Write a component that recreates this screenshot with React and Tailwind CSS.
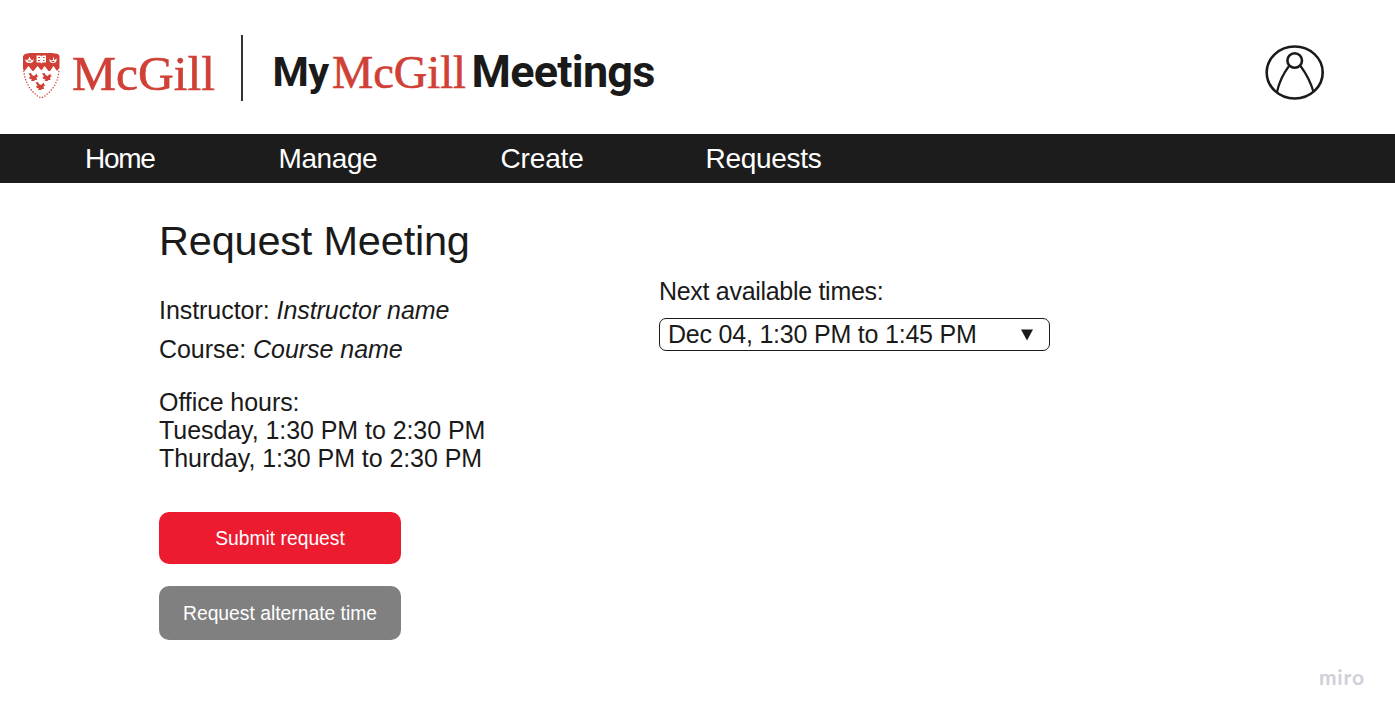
const SERIF = "'Liberation Serif', 'Times New Roman', serif";

function Crest() {
  return (
    <svg className="mt-[53px] ml-[23px] h-[46px] w-[37px] shrink-0" viewBox="0 0 37 46" fill="#d04036">
      <path d="M2 1L7 0H29L35 1L36.500 3V15L34 18L30.500 13L27 18H25.500L21.500 13L18.500 17.500L14.500 13L10.500 18H9.500L5.500 13L1.500 18L0 16V3Z" />
      <g fill="#fff">
        <path d="M13.500 2.500H17.500L18.500 3.500L19.500 2.500H23V9.500H19.500L18.500 10.500L17.500 9.500H13.500Z" />
        <path d="M2 6L4 7.500L6 5V4H7V5L9 7.500L11 6L10 9L8 10H5L3 9Z" />
        <path d="M26 6L28 7.500L30 7V4.500H31V7L34 5.500L33 9L31 10H29L27 9Z" />
      </g>
      <g>
        <rect x="15" y="4" width="2" height="1" />
        <rect x="20" y="4" width="1.500" height="1" />
        <rect x="15" y="7" width="2" height="1" />
        <rect x="20" y="7" width="1.500" height="1" />
        <rect x="5" y="7.500" width="3" height="1" />
        <rect x="28.500" y="8" width="3" height="1" />
      </g>
      <path id="bird" d="M5.500 20.500L8 20L9 22L11 23L14 20.500V22.500L15.500 23L13.500 24.500L14 27H12L11 28H8L9 26.500L7 26L6 24.500L7.500 23.500Z" />
      <use href="#bird" x="13.500" />
      <use href="#bird" x="7" y="9" />
      <path d="M0.700 17.500L1.200 21.500L3 28L6 34L10 39L15 43.500L18.500 45L22 43L27 38.500L31 33.500L34 27.500L35.500 21.500L36 17" fill="none" stroke="#d04036" strokeWidth="1.200" strokeDasharray="1.400 1.500" />
    </svg>
  );
}

function Wordmark({ className, width, size, baseline }) {
  return (
    <svg className={className} fill="#d04036" stroke="#d04036" strokeWidth="0.6">
      <text x="1" y={baseline} fontFamily={SERIF} fontSize={size} textLength={width} lengthAdjust="spacingAndGlyphs">
        McGill
      </text>
    </svg>
  );
}

function Header() {
  return (
    <header className="flex h-[134px] items-start">
      <Crest />
      <Wordmark className="mt-[40px] ml-[11px] h-[66px] w-[147px] shrink-0" width={143} size={49} baseline={49.5} />
      <div className="mt-[35px] ml-[23px] h-[66px] w-[1.500px] shrink-0 bg-[#333]" />
      <h1 className="flex font-[Roboto,sans-serif] font-bold text-[#1a1a1a]">
        <span className="mt-[48px] ml-[30px] w-[58px] text-[41.500px] leading-[48px] tracking-[-0.700px] whitespace-nowrap">My</span>
        <Wordmark className="mt-[40px] h-[66px] w-[139px] font-normal" width={134} size={47} baseline={47.5} />
        <span className="mt-[46px] ml-[2px] text-[45px] leading-[52px] tracking-[-0.750px]">Meetings</span>
      </h1>
      <svg className="mt-[44px] mr-[70px] ml-auto h-[57px] w-[60px] shrink-0" viewBox="0 0 60 57" fill="none" stroke="#1a1a1a" strokeWidth="2.600">
        <ellipse cx="29.700" cy="28.500" rx="28" ry="26" />
        <circle cx="29.700" cy="16.500" r="7.300" />
        <path d="M24 22Q15 34 12 48M35.500 22Q44.500 34 48.500 48" strokeWidth="2.200" />
      </svg>
    </header>
  );
}

export default function App() {
  return (
    <div className="flex h-[716px] w-[1395px] flex-col overflow-hidden bg-white font-['Liberation_Sans',Arial,sans-serif] text-[#1a1a1a]">
      <Header />
      <nav className="flex h-[49px] shrink-0 bg-[#1c1c1c] pl-[85px] text-[28px] leading-[49px] text-white">
        <a className="w-[193.500px] tracking-[-1.300px]">Home</a>
        <a className="w-[222px] tracking-[-0.400px]">Manage</a>
        <a className="w-[205px] tracking-[-0.150px]">Create</a>
        <a className="tracking-[-0.300px]">Requests</a>
      </nav>
      <main className="flex flex-1 pl-[159px] text-[25px] leading-[28px]">
        <section className="w-[500px] pt-[34px]">
          <h2 className="text-[41.500px] leading-[48px] tracking-[-0.200px]">Request Meeting</h2>
          <p className="mt-[31px] tracking-[-0.050px]">Instructor: <em>Instructor name</em></p>
          <p className="mt-[11px] tracking-[-0.050px]">Course: <em>Course name</em></p>
          <p className="mt-[25px] tracking-[-0.060px]">
            Office hours:<br />Tuesday, 1:30 PM to 2:30 PM<br />Thurday, 1:30 PM to 2:30 PM
          </p>
          <div className="mt-[40px] flex w-[242px] flex-col gap-[22px] text-[19.300px] text-white">
            <button className="h-[52px] rounded-[10px] bg-[#ed1b2f] pt-[2px]">Submit request</button>
            <button className="h-[54px] rounded-[10px] bg-[#808080] pt-[2px]">Request alternate time</button>
          </div>
        </section>
        <section className="flex flex-1 flex-col pt-[94px]">
          <p className="tracking-[-0.300px]">Next available times:</p>
          <button className="mt-[13px] flex h-[33px] w-[391px] items-center justify-between rounded-[7px] border-[1.500px] border-[#1a1a1a] pr-[16px] pl-[8px] text-left">
            <span className="-mt-[2px] tracking-[-0.210px]">Dec 04, 1:30 PM to 1:45 PM</span>
            <svg className="h-[12px] w-[12px]" viewBox="0 0 12 12" fill="#1a1a1a"><path d="M0 0.500H12L6 11.500Z" /></svg>
          </button>
          <div className="mt-auto mr-[30px] mb-[25px] self-end font-[Lato,sans-serif] text-[21px] leading-[28px] font-bold tracking-[0.900px] text-[#d0cfda]">miro</div>
        </section>
      </main>
    </div>
  );
}
